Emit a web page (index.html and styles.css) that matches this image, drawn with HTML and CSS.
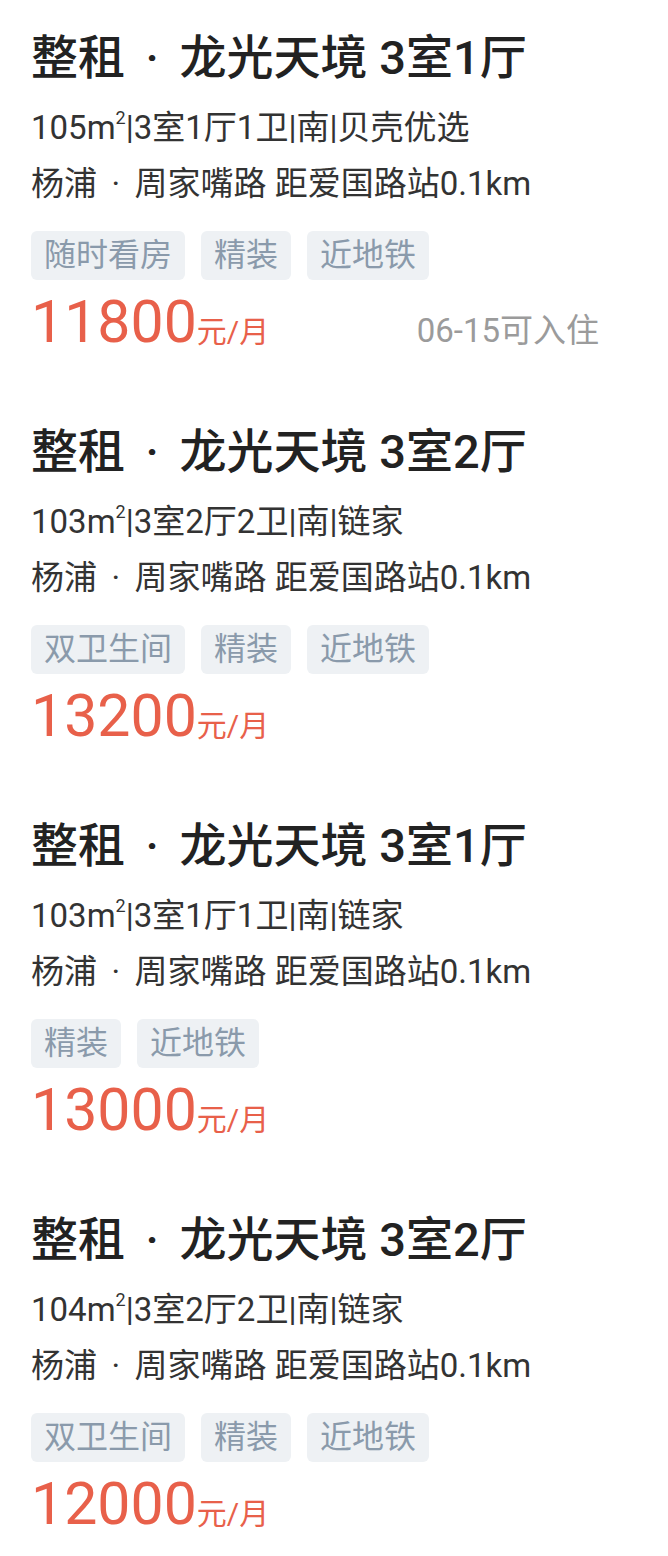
FILE: index.html
```html
<!DOCTYPE html>
<html lang="zh-CN">
<head>
    <meta charset="UTF-8">
    <title>租房列表</title>
    <link rel="stylesheet" href="styles.css">
</head>
<body>
<div class="list">
    <div class="house">
        <div class="title">整租 <span class="dot">·</span> 龙光天境 3室1厅</div>
        <div class="info">105m<sup>2</sup>|3室1厅1卫|南|贝壳优选</div>
        <div class="info">杨浦 <span class="dot">·</span> 周家嘴路 距爱国路站0.1km</div>
        <div class="tags">
            <span class="tag">随时看房</span>
            <span class="tag">精装</span>
            <span class="tag">近地铁</span>
        </div>
        <div class="bottom">
            <div class="price">11800<span class="unit">元/月</span></div>
            <div class="date">06-15可入住</div>
        </div>
    </div>
    <div class="house">
        <div class="title">整租 <span class="dot">·</span> 龙光天境 3室2厅</div>
        <div class="info">103m<sup>2</sup>|3室2厅2卫|南|链家</div>
        <div class="info">杨浦 <span class="dot">·</span> 周家嘴路 距爱国路站0.1km</div>
        <div class="tags">
            <span class="tag">双卫生间</span>
            <span class="tag">精装</span>
            <span class="tag">近地铁</span>
        </div>
        <div class="bottom">
            <div class="price">13200<span class="unit">元/月</span></div>
        </div>
    </div>
    <div class="house">
        <div class="title">整租 <span class="dot">·</span> 龙光天境 3室1厅</div>
        <div class="info">103m<sup>2</sup>|3室1厅1卫|南|链家</div>
        <div class="info">杨浦 <span class="dot">·</span> 周家嘴路 距爱国路站0.1km</div>
        <div class="tags">
            <span class="tag">精装</span>
            <span class="tag">近地铁</span>
        </div>
        <div class="bottom">
            <div class="price">13000<span class="unit">元/月</span></div>
        </div>
    </div>
    <div class="house">
        <div class="title">整租 <span class="dot">·</span> 龙光天境 3室2厅</div>
        <div class="info">104m<sup>2</sup>|3室2厅2卫|南|链家</div>
        <div class="info">杨浦 <span class="dot">·</span> 周家嘴路 距爱国路站0.1km</div>
        <div class="tags">
            <span class="tag">双卫生间</span>
            <span class="tag">精装</span>
            <span class="tag">近地铁</span>
        </div>
        <div class="bottom">
            <div class="price">12000<span class="unit">元/月</span></div>
        </div>
    </div>
</div>
</body>
</html>
```

FILE: styles.css
```css
body {
    margin: 0;
    background: #fff;
    font-family: Roboto, "Noto Sans CJK SC", sans-serif;
    color: #222;
}
.list {
    padding: 28px 69px 0 31px;
    display: flex;
    flex-direction: column;
    gap: 65px;
}
.house {
    display: flex;
    flex-direction: column;
}
.title {
    font-size: 47px;
    font-weight: 500;
    line-height: 60px;
    height: 60px;
    color: #222;
    white-space: nowrap;
}
.dot {
    margin: 0 0.19em;
}
.info {
    font-size: 33px;
    line-height: 56px;
    height: 56px;
    color: #333;
    white-space: nowrap;
}
.title + .info {
    margin-top: 12px;
}
.info sup {
    font-size: 18px;
    line-height: 0;
    vertical-align: 15px;
}
.tags {
    display: flex;
    gap: 16px;
    margin-top: 19px;
    height: 49px;
}
.tag {
    background: #eef1f4;
    color: #8a9aab;
    font-size: 32px;
    line-height: 49px;
    padding: 0 13px;
    border-radius: 6px;
}
.bottom {
    display: flex;
    justify-content: space-between;
    align-items: baseline;
    margin-top: 7px;
    height: 70px;
}
.price {
    color: #e8604a;
    font-size: 59px;
    line-height: 70px;
}
.unit {
    font-size: 30px;
    line-height: 1;
}
.date {
    color: #9b9b9b;
    font-size: 33px;
    line-height: 1;
}
```
